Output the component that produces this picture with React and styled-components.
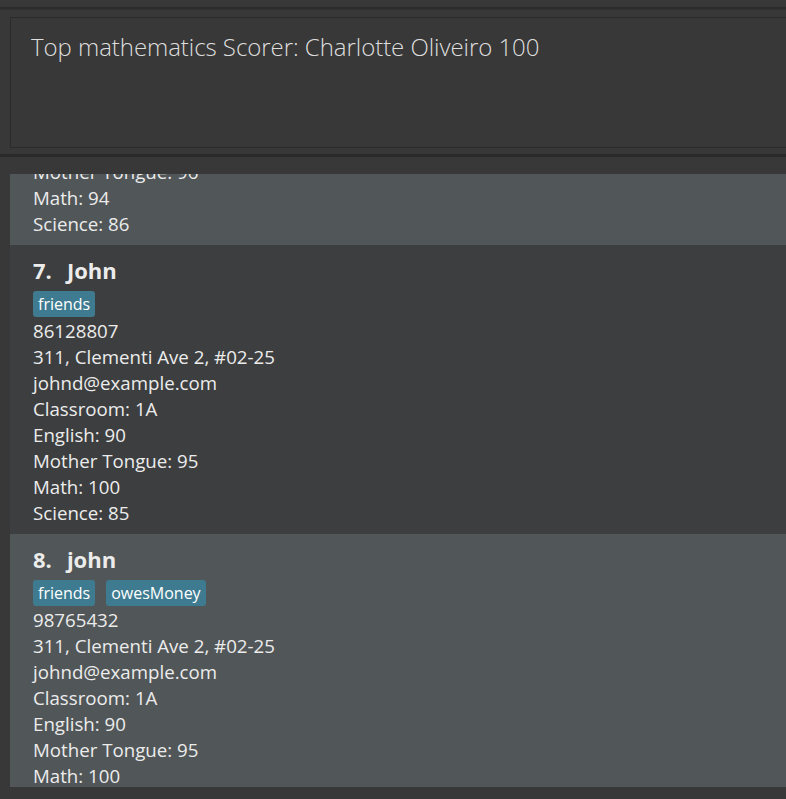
import React from "react";
import styled, { createGlobalStyle } from "styled-components";

const Global = createGlobalStyle`
  html, body { margin: 0; padding: 0; background: #383838; }
  body { font-family: "Open Sans", "Noto Sans", sans-serif; overflow: hidden; }
  * { box-sizing: border-box; }
`;

const Window = styled.div`
  width: 786px;
  height: 799px;
  background: #383838;
  display: flex;
  flex-direction: column;
  overflow: hidden;
`;

const TopBar = styled.div`
  height: 9px;
  flex: none;
  border-bottom: 2px solid #2b2b2b;
  box-shadow: 0 1px 0 #323232;
`;

const ResultPane = styled.div`
  flex: none;
  padding: 8px 0 6px 10px;
  border-bottom: 3px solid #2a2a2a;
`;

const ResultBox = styled.div`
  height: 131px;
  margin-right: -10px;
  border: 1px solid #2b2b2b;
  background: #383838;
  padding: 12px 20px;
  font-size: 24px;
  font-weight: 300;
  letter-spacing: -0.05px;
  line-height: 34px;
  color: #dedede;
`;

const ListPane = styled.div`
  flex: none;
  padding: 17px 0 0 10px;
`;

const Viewport = styled.div`
  height: 613px;
  overflow: hidden;
`;

const List = styled.div`
  margin-top: -15px;
  display: flex;
  flex-direction: column;
`;

const Card = styled.div`
  background: ${(p) => (p.$odd ? "#515658" : "#3c3e3f")};
  padding: ${(p) => (p.$partial ? "0 23px 8px" : "10px 23px 8px")};
  color: #ececec;
`;

const Title = styled.div`
  display: flex;
  gap: 15px;
  font-size: 22px;
  font-weight: 700;
  line-height: 30px;
  color: #ececec;
`;

const Tags = styled.div`
  display: flex;
  gap: 11px;
  margin-top: 6px;
  height: 27px;
`;

const Tag = styled.span`
  display: inline-flex;
  align-items: center;
  height: 26px;
  padding: 0 5px;
  border-radius: 3px;
  background: #3e7b91;
  color: #ffffff;
  font-size: 16px;
  font-weight: 500;
`;

const Line = styled.div`
  font-size: 18.7px;
  line-height: 26px;
`;

const people = [
  {
    index: 7,
    name: "John",
    tags: ["friends"],
    phone: "86128807",
    address: "311, Clementi Ave 2, #02-25",
    email: "johnd@example.com",
    classroom: "1A",
    english: 90,
    mt: 95,
    math: 100,
    science: 85,
  },
  {
    index: 8,
    name: "john",
    tags: ["friends", "owesMoney"],
    phone: "98765432",
    address: "311, Clementi Ave 2, #02-25",
    email: "johnd@example.com",
    classroom: "1A",
    english: 90,
    mt: 95,
    math: 100,
    science: 85,
  },
];

function PersonCard({ p, odd }) {
  return (
    <Card $odd={odd}>
      <Title>
        <span>{p.index}.</span>
        <span>{p.name}</span>
      </Title>
      <Tags>
        {p.tags.map((t) => (
          <Tag key={t}>{t}</Tag>
        ))}
      </Tags>
      <Line>{p.phone}</Line>
      <Line>{p.address}</Line>
      <Line>{p.email}</Line>
      <Line>Classroom: {p.classroom}</Line>
      <Line>English: {p.english}</Line>
      <Line>Mother Tongue: {p.mt}</Line>
      <Line>Math: {p.math}</Line>
      <Line>Science: {p.science}</Line>
    </Card>
  );
}

export default function App() {
  return (
    <Window>
      <Global />
      <TopBar />
      <ResultPane>
        <ResultBox>Top mathematics Scorer: Charlotte Oliveiro 100</ResultBox>
      </ResultPane>
      <ListPane>
        <Viewport>
          <List>
            <Card $odd $partial>
              <Line>Mother Tongue: 96</Line>
              <Line>Math: 94</Line>
              <Line>Science: 86</Line>
            </Card>
            {people.map((p, i) => (
              <PersonCard key={p.index} p={p} odd={i % 2 === 1} />
            ))}
          </List>
        </Viewport>
      </ListPane>
    </Window>
  );
}
